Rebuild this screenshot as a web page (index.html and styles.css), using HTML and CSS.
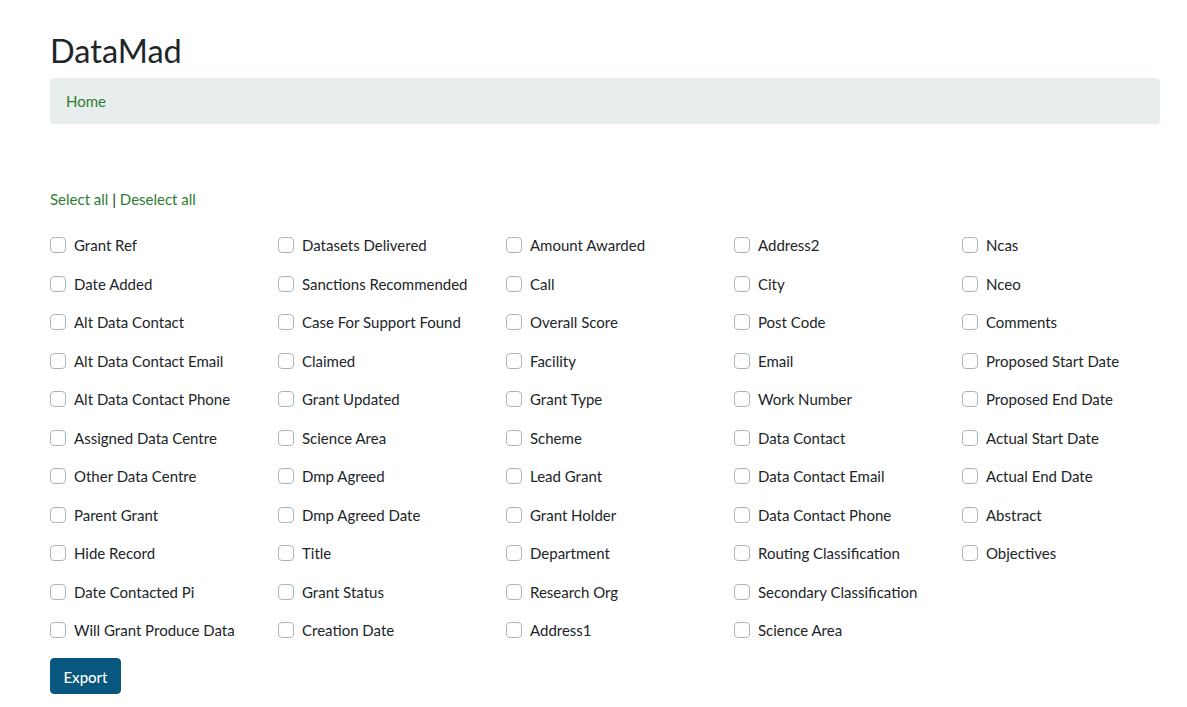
FILE: index.html
```html
<!DOCTYPE html>
<html lang="en">
<head>
<meta charset="utf-8">
<title>DataMad</title>
<link rel="stylesheet" href="styles.css">
</head>
<body>
<div class="container">
  <h1 class="title">DataMad</h1>
  <nav class="breadcrumb"><a href="#" class="link">Home</a></nav>
  <div class="select-links"><a href="#" class="link">Select all</a> | <a href="#" class="link">Deselect all</a></div>
  <form class="fields">
    <label class="field"><input type="checkbox" class="check"><span>Grant Ref</span></label>
    <label class="field"><input type="checkbox" class="check"><span>Datasets Delivered</span></label>
    <label class="field"><input type="checkbox" class="check"><span>Amount Awarded</span></label>
    <label class="field"><input type="checkbox" class="check"><span>Address2</span></label>
    <label class="field"><input type="checkbox" class="check"><span>Ncas</span></label>

    <label class="field"><input type="checkbox" class="check"><span>Date Added</span></label>
    <label class="field"><input type="checkbox" class="check"><span>Sanctions Recommended</span></label>
    <label class="field"><input type="checkbox" class="check"><span>Call</span></label>
    <label class="field"><input type="checkbox" class="check"><span>City</span></label>
    <label class="field"><input type="checkbox" class="check"><span>Nceo</span></label>

    <label class="field"><input type="checkbox" class="check"><span>Alt Data Contact</span></label>
    <label class="field"><input type="checkbox" class="check"><span>Case For Support Found</span></label>
    <label class="field"><input type="checkbox" class="check"><span>Overall Score</span></label>
    <label class="field"><input type="checkbox" class="check"><span>Post Code</span></label>
    <label class="field"><input type="checkbox" class="check"><span>Comments</span></label>

    <label class="field"><input type="checkbox" class="check"><span>Alt Data Contact Email</span></label>
    <label class="field"><input type="checkbox" class="check"><span>Claimed</span></label>
    <label class="field"><input type="checkbox" class="check"><span>Facility</span></label>
    <label class="field"><input type="checkbox" class="check"><span>Email</span></label>
    <label class="field"><input type="checkbox" class="check"><span>Proposed Start Date</span></label>

    <label class="field"><input type="checkbox" class="check"><span>Alt Data Contact Phone</span></label>
    <label class="field"><input type="checkbox" class="check"><span>Grant Updated</span></label>
    <label class="field"><input type="checkbox" class="check"><span>Grant Type</span></label>
    <label class="field"><input type="checkbox" class="check"><span>Work Number</span></label>
    <label class="field"><input type="checkbox" class="check"><span>Proposed End Date</span></label>

    <label class="field"><input type="checkbox" class="check"><span>Assigned Data Centre</span></label>
    <label class="field"><input type="checkbox" class="check"><span>Science Area</span></label>
    <label class="field"><input type="checkbox" class="check"><span>Scheme</span></label>
    <label class="field"><input type="checkbox" class="check"><span>Data Contact</span></label>
    <label class="field"><input type="checkbox" class="check"><span>Actual Start Date</span></label>

    <label class="field"><input type="checkbox" class="check"><span>Other Data Centre</span></label>
    <label class="field"><input type="checkbox" class="check"><span>Dmp Agreed</span></label>
    <label class="field"><input type="checkbox" class="check"><span>Lead Grant</span></label>
    <label class="field"><input type="checkbox" class="check"><span>Data Contact Email</span></label>
    <label class="field"><input type="checkbox" class="check"><span>Actual End Date</span></label>

    <label class="field"><input type="checkbox" class="check"><span>Parent Grant</span></label>
    <label class="field"><input type="checkbox" class="check"><span>Dmp Agreed Date</span></label>
    <label class="field"><input type="checkbox" class="check"><span>Grant Holder</span></label>
    <label class="field"><input type="checkbox" class="check"><span>Data Contact Phone</span></label>
    <label class="field"><input type="checkbox" class="check"><span>Abstract</span></label>

    <label class="field"><input type="checkbox" class="check"><span>Hide Record</span></label>
    <label class="field"><input type="checkbox" class="check"><span>Title</span></label>
    <label class="field"><input type="checkbox" class="check"><span>Department</span></label>
    <label class="field"><input type="checkbox" class="check"><span>Routing Classification</span></label>
    <label class="field"><input type="checkbox" class="check"><span>Objectives</span></label>

    <label class="field"><input type="checkbox" class="check"><span>Date Contacted Pi</span></label>
    <label class="field"><input type="checkbox" class="check"><span>Grant Status</span></label>
    <label class="field"><input type="checkbox" class="check"><span>Research Org</span></label>
    <label class="field"><input type="checkbox" class="check"><span>Secondary Classification</span></label>
    <span class="field empty"></span>

    <label class="field"><input type="checkbox" class="check"><span>Will Grant Produce Data</span></label>
    <label class="field"><input type="checkbox" class="check"><span>Creation Date</span></label>
    <label class="field"><input type="checkbox" class="check"><span>Address1</span></label>
    <label class="field"><input type="checkbox" class="check"><span>Science Area</span></label>
  </form>
  <button type="button" class="btn-export">Export</button>
</div>
</body>
</html>
```

FILE: styles.css
```css
* { box-sizing: border-box; }
html, body { margin: 0; padding: 0; background: #fff; }
body {
  font-family: Lato, "Open Sans", "Liberation Sans", sans-serif;
  font-size: 15px;
  line-height: 22px;
  color: #212529;
}
.container {
  width: 1110px;
  margin-left: 50px;
  padding-top: 32px;
}
.title {
  margin: 0 0 8px;
  font-size: 32.5px;
  line-height: 38px;
  font-weight: 400;
  color: #212529;
}
.breadcrumb {
  background: #e8eded;
  border-radius: 4px;
  padding: 12px 16px;
  height: 46px;
  margin-bottom: 64px;
}
.link { color: #2e7d32; text-decoration: none; }
.select-links { margin-bottom: 24px; }
.fields {
  display: grid;
  grid-template-columns: repeat(5, 198px);
  column-gap: 30px;
  row-gap: 16.5px;
  margin: 0 0 17px;
}
.field {
  display: flex;
  align-items: center;
  gap: 8px;
  height: 22px;
  white-space: nowrap;
}
.check {
  appearance: none;
  -webkit-appearance: none;
  width: 16px;
  height: 16px;
  margin: 0;
  border: 1px solid #adb5bd;
  border-radius: 4px;
  background: #fff;
  flex: none;
}
.btn-export {
  font-family: inherit;
  font-size: 15px;
  font-weight: 500;
  line-height: 24px;
  padding: 6px 12px;
  color: #fff;
  background: #07577e;
  border: 1px solid #07577e;
  border-radius: 4px;
  height: 36px;
  width: 71px;
}
```
